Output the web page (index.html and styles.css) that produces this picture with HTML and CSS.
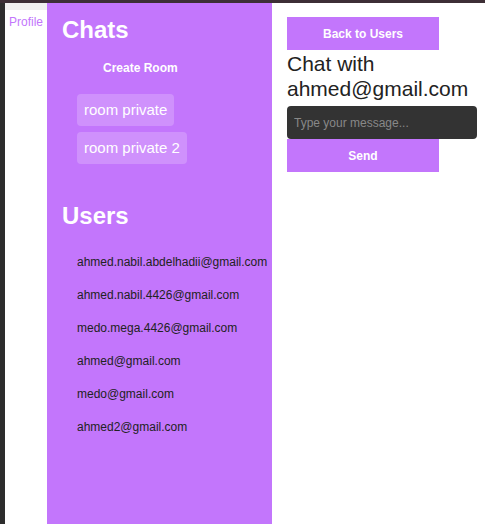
FILE: index.html
```html
<!DOCTYPE html>
<html>
<head>
<meta charset="utf-8">
<link rel="stylesheet" href="styles.css">
</head>
<body>
<div class="app">
  <div class="edge"></div>
  <nav class="nav">
    <div class="nav-top"></div>
    <a class="profile" href="#">Profile</a>
  </nav>
  <aside class="panel">
    <h2 class="panel-title">Chats</h2>
    <button class="create">Create Room</button>
    <div class="rooms">
      <div class="room">room private</div>
      <div class="room">room private 2</div>
    </div>
    <h2 class="panel-title users-title">Users</h2>
    <ul class="users">
      <li>ahmed.nabil.abdelhadii@gmail.com</li>
      <li>ahmed.nabil.4426@gmail.com</li>
      <li>medo.mega.4426@gmail.com</li>
      <li>ahmed@gmail.com</li>
      <li>medo@gmail.com</li>
      <li>ahmed2@gmail.com</li>
    </ul>
  </aside>
  <main class="main">
    <button class="btn">Back to Users</button>
    <h3 class="chat-title">Chat with ahmed@gmail.com</h3>
    <input class="msg" type="text" placeholder="Type your message...">
    <button class="btn">Send</button>
  </main>
</div>
</body>
</html>
```
FILE: styles.css
```css
html, body {
  margin: 0;
  padding: 0;
  height: 100%;
}
body {
  font-family: "Liberation Sans", Arial, sans-serif;
  background: #fff;
  border-top: 3px solid #3d2f36;
  box-sizing: border-box;
}
.app {
  display: flex;
  height: 100%;
}
.edge {
  width: 5px;
  background: #2d2d2d;
  flex: none;
}
.nav {
  width: 42px;
  flex: none;
  background: #fff;
}
.nav-top {
  height: 7px;
  background: #f0f0f0;
}
.profile {
  display: block;
  padding: 5px 0 0 4px;
  font-size: 12px;
  line-height: 14px;
  color: #c376fc;
  text-decoration: none;
}
.panel {
  width: 225px;
  flex: none;
  background: #c376fc;
  padding: 13px 15px;
  box-sizing: border-box;
}
.panel-title {
  margin: 0;
  font-size: 24px;
  line-height: 28px;
  font-weight: bold;
  color: #fff;
}
.create {
  display: block;
  margin: 9px 0 0 15px;
  padding: 8px 26px;
  font-family: inherit;
  font-size: 12px;
  line-height: 14px;
  font-weight: bold;
  color: #fff;
  background: transparent;
  border: none;
}
.rooms {
  margin-top: 11px;
  padding-left: 15px;
  display: flex;
  flex-direction: column;
  align-items: flex-start;
  gap: 6px;
}
.room {
  background: rgba(255, 255, 255, 0.2);
  border-radius: 4px;
  padding: 0 7px;
  font-size: 15px;
  line-height: 32px;
  color: #fff;
}
.users-title {
  margin-top: 38px;
}
.users {
  list-style: none;
  margin: 16px 0 0 0;
  padding: 0 0 0 15px;
}
.users li {
  font-size: 12px;
  line-height: 33px;
  color: #222;
  white-space: nowrap;
}
.main {
  flex: 1;
  padding: 14px 15px;
}
.btn {
  display: block;
  width: 152px;
  height: 33px;
  margin: 0;
  border: none;
  background: #c376fc;
  color: #fff;
  font-family: inherit;
  font-size: 12px;
  font-weight: bold;
}
.chat-title {
  margin: 1px 0 5px 0;
  font-size: 21px;
  line-height: 25px;
  font-weight: normal;
  color: #222;
}
.msg {
  display: block;
  width: 190px;
  height: 33px;
  box-sizing: border-box;
  margin: 0;
  padding: 0 7px;
  border: none;
  border-radius: 4px;
  background: #333;
  color: #ddd;
  font-family: inherit;
  font-size: 12px;
  outline: none;
}
.msg::placeholder {
  color: #888;
}
```
